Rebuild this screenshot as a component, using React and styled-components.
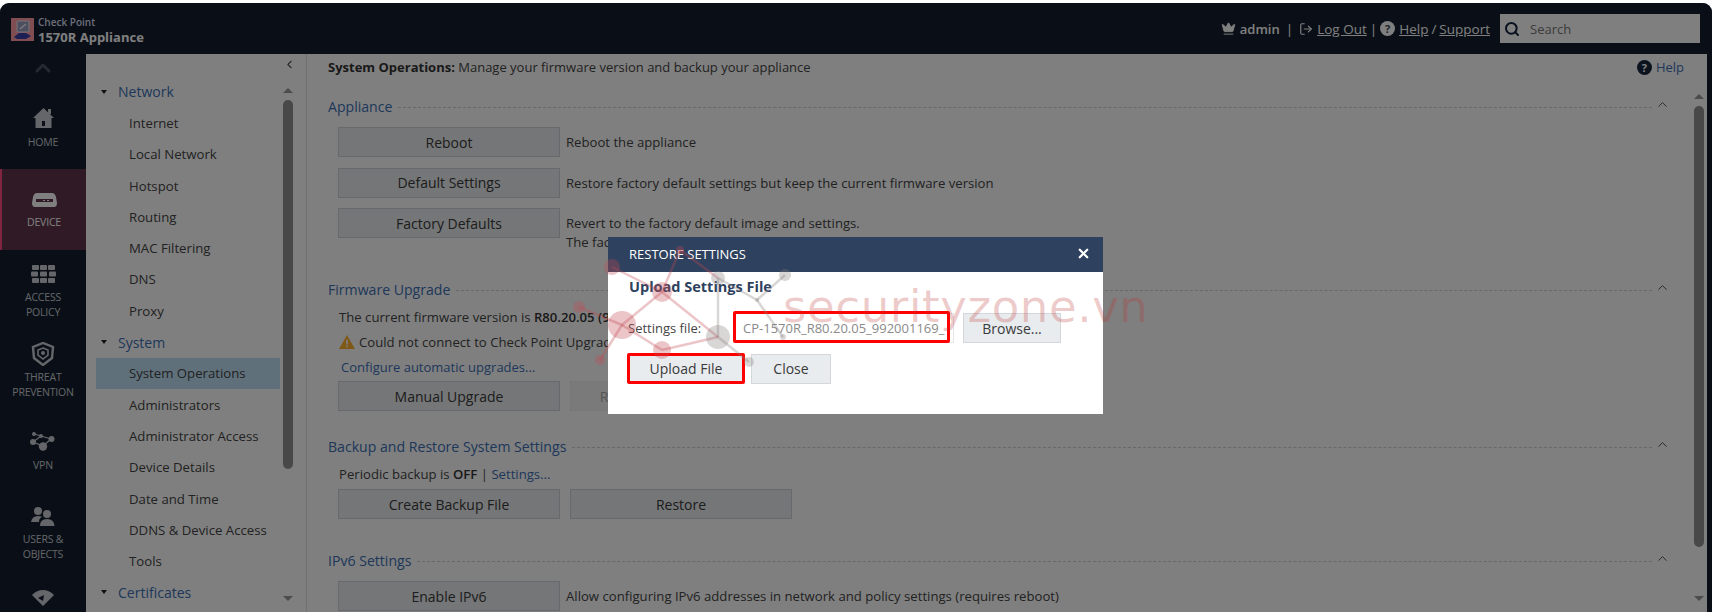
import React from 'react'
import styled, { createGlobalStyle } from 'styled-components'
import { Search, LogOut, ChevronUp, ChevronLeft, Crown, X } from 'lucide-react'

const GlobalStyle = createGlobalStyle`
  html, body {
    margin: 0;
    height: 612px;
    overflow: hidden;
    background: #fff;
    font-family: "Open Sans", "Liberation Sans", sans-serif;
  }
  * { box-sizing: border-box; }
`

const treeData = [
  { head: 'Network', items: ['Internet', 'Local Network', 'Hotspot', 'Routing', 'MAC Filtering', 'DNS', 'Proxy'] },
  { head: 'System', items: ['System Operations', 'Administrators', 'Administrator Access', 'Device Details', 'Date and Time', 'DDNS & Device Access', 'Tools'] },
  { head: 'Certificates', items: [] },
]

const nodes = [
  [52, 37, 8, 0], [120, 20, 4, 0], [102, 62, 10, 0], [62, 95, 14, 0], [19, 77, 6, 0], [40, 130, 5, 0],
  [102, 120, 9, 0], [158, 107, 12, 1], [158, 48, 7, 1], [225, 45, 6, 1], [197, 70, 2, 1], [223, 107, 3, 1], [189, 132, 5, 1],
]
const edges = [
  [0, 2, 0], [1, 2, 0], [1, 8, 0], [8, 7, 1], [2, 3, 0], [2, 7, 0], [3, 4, 0], [3, 5, 0], [3, 6, 0], [6, 7, 0], [7, 12, 1], [8, 10, 1], [10, 9, 1], [10, 11, 1],
]

function HomeIcon() {
  return (
    <svg width="21" height="22" viewBox="0 0 21 22" fill="currentColor">
      <path d="M10.5 1 L21 11 L18.5 11 L18.5 21 L2.5 21 L2.5 11 L0 11 Z M9 14 L9 19 L12 19 L12 14 Z" fillRule="evenodd" />
      <rect x="15" y="2" width="3" height="5" />
    </svg>
  )
}

function DeviceIcon() {
  return (
    <svg width="25" height="14" viewBox="0 0 25 14" fill="currentColor">
      <path d="M5 0 H20 Q23 0 24 4 L25 10 Q25 14 22 14 H3 Q0 14 0 10 L1 4 Q2 0 5 0 Z M4 6 V9 H21 V6 Z" fillRule="evenodd" />
      <rect x="11" y="7" width="2" height="1" /><rect x="15" y="7" width="2" height="1" />
    </svg>
  )
}

function GridIcon() {
  return (
    <svg width="25" height="18" viewBox="0 0 25 18" fill="currentColor">
      <rect x="1" y="0" width="7" height="5" rx="1" /><rect x="9" y="0" width="7" height="5" rx="1" /><rect x="17" y="0" width="7" height="5" rx="1" />
      <rect x="0" y="6.5" width="7" height="5" rx="1" /><rect x="9" y="6.5" width="7" height="5" rx="1" /><rect x="18" y="6.5" width="7" height="5" rx="1" />
      <rect x="1" y="13" width="7" height="5" rx="1" /><rect x="9" y="13" width="7" height="5" rx="1" /><rect x="17" y="13" width="7" height="5" rx="1" />
    </svg>
  )
}

function ShieldIcon() {
  return (
    <svg width="24" height="24" viewBox="0 0 24 24" fill="none" stroke="currentColor">
      <path d="M12 1 L22 5 L21 16 L12 23 L3 16 L2 5 Z" strokeWidth="2.4" />
      <path d="M12 6 L17 8 V13 L12 17 L7 13 V8 Z" strokeWidth="1.6" />
      <circle cx="12" cy="11" r="2" fill="currentColor" stroke="none" />
    </svg>
  )
}

function VpnIcon() {
  return (
    <svg width="26" height="20" viewBox="0 0 26 20" fill="currentColor" stroke="currentColor">
      <path d="M4 2 L11 4 L21 7 L13 14 L3 10 L11 4" strokeWidth="1.2" fill="none" />
      <circle cx="4" cy="2" r="2" stroke="none" /><circle cx="11" cy="4" r="2" stroke="none" /><circle cx="3" cy="10" r="3" stroke="none" />
      <circle cx="13" cy="14.5" r="4.2" stroke="none" /><circle cx="21.5" cy="7" r="3" stroke="none" />
    </svg>
  )
}

function UsersIcon() {
  return (
    <svg width="24" height="20" viewBox="0 0 24 20" fill="currentColor">
      <circle cx="7" cy="5" r="4" />
      <path d="M0 16 Q1 10 7 10 Q10 10 11 11 Q8 12 8 16 Z" />
      <circle cx="16" cy="8" r="4" />
      <path d="M9 20 Q9 13 16 13 Q23 13 23.5 20 Z" />
    </svg>
  )
}

function GaugeIcon() {
  return (
    <svg width="22" height="16" viewBox="0 0 22 16" fill="currentColor">
      <path d="M11 0 Q17 0 22 5 L11 16 L0 5 Q5 0 11 0 Z M12 5 L6 8 L11 11 Z" fillRule="evenodd" />
    </svg>
  )
}

function LogoIcon() {
  return (
    <svg width="23" height="23" viewBox="0 0 23 23">
      <rect width="23" height="23" fill="#ff9aa4" />
      <rect x="6" y="3" width="12" height="11" rx="1" fill="#9a9fc0" stroke="#e8e8f0" />
      <path d="M9 11 L15 6" stroke="#fff" strokeWidth="1.2" />
      <path d="M3 19 L8 15 H15 L20 18 L15 21 H6 Z" fill="#3a40a8" />
    </svg>
  )
}

function WarningIcon() {
  return (
    <svg width="16" height="14" viewBox="0 0 16 14">
      <path d="M8 0 L16 14 H0 Z" fill="#ffb030" />
      <rect x="7.2" y="4.5" width="1.6" height="5" fill="#fff" />
      <rect x="7.2" y="10.5" width="1.6" height="1.6" fill="#fff" />
    </svg>
  )
}

function Section({ title, children, gap, bottom }) {
  return (
    <SectionBox $bottom={bottom}>
      <SectionHead $gap={gap}>
        <SectionTitle>{title}</SectionTitle>
        <DotLine />
        <Collapse><ChevronUp size={15} strokeWidth={1.6} /></Collapse>
      </SectionHead>
      {children}
    </SectionBox>
  )
}

export default function App() {
  return (
    <Page>
      <GlobalStyle />
      <Frame>
        <TopBar>
          <Brand>
            <LogoIcon />
            <BrandText>
              <BrandSmall>Check Point</BrandSmall>
              <BrandBig>1570R Appliance</BrandBig>
            </BrandText>
          </Brand>
          <TopRight>
            <Crown size={15} fill="#fff" strokeWidth={1.5} />
            <AdminName>admin</AdminName>
            <Sep $left={2} $right={2}>|</Sep>
            <LogOut size={14} strokeWidth={2} />
            <TopLink>Log Out</TopLink>
            <Sep $left={-1} $right={-1}>|</Sep>
            <HelpDot $light>?</HelpDot>
            <TopLink>Help</TopLink>
            <Slash>/</Slash>
            <TopLink>Support</TopLink>
            <SearchBox>
              <Search size={16} strokeWidth={3} color="#12233c" />
              <SearchLabel>Search</SearchLabel>
            </SearchBox>
          </TopRight>
        </TopBar>
        <Body>
          <Rail>
            <RailUp><ChevronUp size={24} strokeWidth={3} /></RailUp>
            <RailItem $h={102} $pt={40} $gap={6}><HomeIcon /><RailLabel>HOME</RailLabel></RailItem>
            <RailItem $h={81} $pt={24} $gap={8} $active><DeviceIcon /><RailLabel>DEVICE</RailLabel></RailItem>
            <RailItem $h={77} $pt={15} $gap={7}><GridIcon /><RailLabel>ACCESS<br />POLICY</RailLabel></RailItem>
            <RailItem $h={80} $pt={15} $gap={4}><ShieldIcon /><RailLabel>THREAT<br />PREVENTION</RailLabel></RailItem>
            <RailItem $h={78} $pt={25} $gap={6}><VpnIcon /><RailLabel>VPN</RailLabel></RailItem>
            <RailItem $h={78} $pt={21} $gap={6}><UsersIcon /><RailLabel>USERS &amp;<br />OBJECTS</RailLabel></RailItem>
            <RailItem $h={49} $pt={27}><GaugeIcon /></RailItem>
          </Rail>
          <TreePanel>
            <TreeTop><ChevronLeft size={13} strokeWidth={2} /></TreeTop>
            <TreeBody>
              <TreeList>
                {treeData.map((group) => (
                  <React.Fragment key={group.head}>
                    <TreeHead><Caret />{group.head}</TreeHead>
                    {group.items.map((item) => (
                      <TreeRow key={item} $on={item === 'System Operations'}>{item}</TreeRow>
                    ))}
                  </React.Fragment>
                ))}
              </TreeList>
              <Scroll $side={3} $top={13} $thumbH={369}>
                <ArrowUp />
                <Thumb />
                <ArrowDown />
              </Scroll>
            </TreeBody>
          </TreePanel>
          <Content>
            <TitleRow>
              <span><b>System Operations:</b> Manage your firmware version and backup your appliance</span>
              <HelpLink>
                <HelpDot>?</HelpDot>
                Help
              </HelpLink>
            </TitleRow>
            <ContentMain>
              <Sections>
                <Section title="Appliance" gap={8} bottom={13.5}>
                  <ActionRow>
                    <Btn>Reboot</Btn>
                    <Desc>Reboot the appliance</Desc>
                  </ActionRow>
                  <ActionRow>
                    <Btn>Default Settings</Btn>
                    <Desc>Restore factory default settings but keep the current firmware version</Desc>
                  </ActionRow>
                  <ActionRow>
                    <Btn>Factory Defaults</Btn>
                    <Desc>
                      Revert to the factory default image and settings.<br />
                      The factory firmware version is: R80.20.05 (992001169)
                    </Desc>
                  </ActionRow>
                </Section>
                <Section title="Firmware Upgrade" gap={3} bottom={22}>
                  <InfoLine>The current firmware version is <b>R80.20.05 (992001169)</b></InfoLine>
                  <InfoLine><WarningIcon />Could not connect to Check Point Upgrade Service</InfoLine>
                  <ConfigLink>Configure automatic upgrades...</ConfigLink>
                  <BtnRow>
                    <Btn>Manual Upgrade</Btn>
                    <Btn $faded>Revert to Previous Image</Btn>
                  </BtnRow>
                </Section>
                <Section title="Backup and Restore System Settings" gap={3} bottom={28}>
                  <InfoLine $h={27}>Periodic backup is <b>OFF</b> | <BlueText>Settings...</BlueText></InfoLine>
                  <BtnRow>
                    <Btn>Create Backup File</Btn>
                    <Btn>Restore</Btn>
                  </BtnRow>
                </Section>
                <Section title="IPv6 Settings" gap={8} bottom={0}>
                  <ActionRow>
                    <Btn>Enable IPv6</Btn>
                    <Desc>Allow configuring IPv6 addresses in network and policy settings (requires reboot)</Desc>
                  </ActionRow>
                </Section>
              </Sections>
              <Scroll $side={0} $top={14} $thumbH={441}>
                <ArrowUp />
                <Thumb />
                <ArrowDown />
              </Scroll>
            </ContentMain>
          </Content>
        </Body>
      </Frame>
      <Shade />
      <Modal>
        <ModalHead>
          <span>RESTORE SETTINGS</span>
          <X size={15} strokeWidth={3.5} color="#fff" />
        </ModalHead>
        <ModalBody>
          <ModalTitle>Upload Settings File</ModalTitle>
          <FileRow>
            <FileLabel>Settings file:</FileLabel>
            <FileInput>CP-1570R_R80.20.05_992001169_</FileInput>
            <ModalBtn $w={98}>Browse...</ModalBtn>
            <RedBox />
          </FileRow>
          <ModalActions>
            <ModalBtn $w={118} $marked>Upload File</ModalBtn>
            <ModalBtn $w={80}>Close</ModalBtn>
          </ModalActions>
        </ModalBody>
      </Modal>
      <Watermark viewBox="0 0 240 150" width="240" height="150">
        {edges.map(([a, b, gray], i) => (
          <line key={i} x1={nodes[a][0]} y1={nodes[a][1]} x2={nodes[b][0]} y2={nodes[b][1]} stroke={gray ? '#8a8080' : '#c04a55'} strokeOpacity={0.32} strokeWidth="2.5" />
        ))}
        {nodes.map(([x, y, r, gray], i) => (
          <circle key={i} cx={x} cy={y} r={r} fill={gray ? '#8a8080' : '#c04a55'} fillOpacity={0.32} />
        ))}
      </Watermark>
      <WatermarkText>securityzone.vn</WatermarkText>
    </Page>
  )
}

const Page = styled.div`
  position: relative;
  width: 1717px;
  height: 612px;
  padding: 3px 5px 0 0;
  overflow: hidden;
  background: #fff;
`

const Frame = styled.div`
  height: 609px;
  display: flex;
  flex-direction: column;
  background: #141e2e;
  border-radius: 9px 9px 0 0;
  border-right: 5px solid #141e2e;
  overflow: hidden;
  color: #3a3a3a;
  font-size: 13px;
`

const TopBar = styled.div`
  height: 51px;
  flex: none;
  display: flex;
  align-items: center;
  justify-content: space-between;
  padding: 0 7px 0 11px;
  color: #fff;
`

const Brand = styled.div`
  align-self: flex-start;
  display: flex;
  align-items: flex-start;
  gap: 4px;
  padding-top: 15px;
`

const BrandText = styled.div`
  margin-top: -2px;
  display: flex;
  flex-direction: column;
`

const BrandSmall = styled.span`
  font-size: 10px;
  line-height: 12px;
  font-weight: 600;
  color: #d8dcf0;
`

const BrandBig = styled.span`
  margin-top: 2px;
  font-size: 13px;
  line-height: 15px;
  font-weight: 700;
`

const TopRight = styled.div`
  display: flex;
  align-items: center;
  gap: 4px;
  font-size: 13.5px;
`

const AdminName = styled.span`
  font-weight: 600;
  font-size: 13px;
`

const Sep = styled.span`
  margin: 0 ${(p) => p.$right}px 0 ${(p) => p.$left}px;
`

const Slash = styled.span`
  margin: 0 -1px;
`

const TopLink = styled.span`
  text-decoration: underline;
`

const SearchBox = styled.div`
  width: 200px;
  height: 29px;
  margin-left: 6px;
  padding: 0 4px;
  display: flex;
  align-items: center;
  gap: 10px;
  background: #fff;
`

const SearchLabel = styled.span`
  color: #777;
  font-size: 13px;
`

const Body = styled.div`
  flex: 1;
  display: flex;
  min-height: 0;
`

const Rail = styled.div`
  width: 86px;
  flex: none;
  color: #c8ccd2;
`

const RailUp = styled.div`
  height: 13px;
  display: flex;
  justify-content: center;
  color: #4a5260;

  svg { margin-top: 2px; }
`

const RailItem = styled.div`
  height: ${(p) => p.$h}px;
  display: flex;
  flex-direction: column;
  align-items: center;
  padding-top: ${(p) => p.$pt}px;
  gap: ${(p) => p.$gap || 0}px;
  ${(p) => p.$active && 'background: #60344c; border-left: 2px solid #ff4a80; color: #fff;'}
`

const RailLabel = styled.div`
  font-size: 10.5px;
  line-height: 14.5px;
  text-align: center;
  letter-spacing: -0.2px;
`

const TreePanel = styled.div`
  width: 221px;
  flex: none;
  display: flex;
  flex-direction: column;
  background: #fff;
  border-right: 1px solid #e3e3e3;
`

const TreeTop = styled.div`
  height: 21px;
  display: flex;
  justify-content: flex-end;
  align-items: center;
  padding-right: 10px;
  color: #555;
`

const TreeBody = styled.div`
  flex: 1;
  display: flex;
  min-height: 0;
`

const TreeList = styled.div`
  width: 194px;
  flex: none;
  padding: 1px 0 0 10px;
`

const TreeHead = styled.div`
  height: 31.3px;
  display: flex;
  align-items: center;
  padding-left: 5px;
  color: #3c6fb4;
  font-size: 14px;
`

const Caret = styled.span`
  width: 0;
  height: 0;
  margin-right: 11px;
  border-left: 3.5px solid transparent;
  border-right: 3.5px solid transparent;
  border-top: 4px solid #222;
`

const TreeRow = styled.div`
  height: 31.3px;
  display: flex;
  align-items: center;
  padding-left: 33px;
  color: #444;
  font-size: 13.2px;
  ${(p) => p.$on && 'background: #bfe0f7;'}
`

const Scroll = styled.div`
  width: 10px;
  margin: 0 3px 0 ${(p) => p.$side}px;
  flex: none;
  display: flex;
  flex-direction: column;
  align-items: center;
  padding: ${(p) => p.$top}px 0 11px;
  --thumb: ${(p) => p.$thumbH}px;
`

const ArrowUp = styled.div`
  width: 0;
  height: 0;
  flex: none;
  margin-bottom: 7px;
  border-left: 5px solid transparent;
  border-right: 5px solid transparent;
  border-bottom: 5px solid #999;
`

const ArrowDown = styled.div`
  width: 0;
  height: 0;
  flex: none;
  margin-top: auto;
  border-left: 5px solid transparent;
  border-right: 5px solid transparent;
  border-top: 5px solid #999;
`

const Thumb = styled.div`
  width: 100%;
  height: var(--thumb);
  flex: none;
  background: #909090;
  border-radius: 5px;
`

const Content = styled.div`
  flex: 1;
  min-width: 0;
  display: flex;
  flex-direction: column;
  background: #fff;
  padding-left: 21px;
`

const TitleRow = styled.div`
  height: 26px;
  flex: none;
  display: flex;
  align-items: center;
  justify-content: space-between;
  padding-right: 23px;
  font-size: 13px;
  color: #444;

  b { font-weight: 700; color: #333; }
`

const HelpLink = styled.div`
  display: flex;
  align-items: center;
  gap: 4px;
  color: #3c6fb4;
`

const HelpDot = styled.span`
  width: 15px;
  height: 15px;
  flex: none;
  display: flex;
  align-items: center;
  justify-content: center;
  border-radius: 50%;
  background: ${(p) => (p.$light ? '#fff' : '#17263e')};
  color: ${(p) => (p.$light ? '#3a4456' : '#fff')};
  font-size: 11px;
  font-weight: 700;
`

const ContentMain = styled.div`
  flex: 1;
  min-height: 0;
  display: flex;
`

const Sections = styled.div`
  flex: 1;
  min-width: 0;
  padding: 13px 24px 0 0;
`

const SectionBox = styled.div`
  padding-bottom: ${(p) => p.$bottom}px;
`

const SectionHead = styled.div`
  height: 26px;
  margin-bottom: ${(p) => p.$gap}px;
  display: flex;
  align-items: center;
`

const SectionTitle = styled.span`
  color: #3c6fb4;
  font-size: 14.1px;
`

const DotLine = styled.div`
  flex: 1;
  margin: 2px 3px 0 6px;
  border-top: 1px dashed #d0d0d0;
`

const Collapse = styled.span`
  display: flex;
  margin-top: -3px;
  color: #555;
`

const ActionRow = styled.div`
  min-height: 30px;
  margin: 0 0 10.5px 10px;
  display: flex;
  align-items: flex-start;
  gap: 6px;
`

const Desc = styled.div`
  padding-top: 6px;
  font-size: 13.15px;
  line-height: 19px;
  color: #444;
`

const Btn = styled.div`
  width: 222px;
  height: 30px;
  flex: none;
  display: flex;
  align-items: center;
  justify-content: center;
  background: ${(p) => (p.$faded ? '#f4f4f4' : '#e9ecef')};
  border: 1px solid ${(p) => (p.$faded ? '#eeeeee' : '#cfd3d8')};
  color: ${(p) => (p.$faded ? '#aaa' : '#3a3a3a')};
  font-size: 14px;
`

const BtnRow = styled.div`
  margin-left: 10px;
  display: flex;
  gap: 10px;
`

const InfoLine = styled.div`
  height: ${(p) => p.$h || 24.5}px;
  margin-left: 11px;
  font-size: 13.15px;
  line-height: 24.5px;
  color: #444;
  white-space: nowrap;

  b { font-weight: 600; color: #333; }
  svg { margin-right: 4px; vertical-align: -2px; }
`

const ConfigLink = styled.div`
  height: 27px;
  margin-left: 13px;
  color: #3c6fb4;
  font-size: 13px;
  line-height: 26px;
`

const BlueText = styled.span`
  color: #3c6fb4;
`

const Shade = styled.div`
  position: absolute;
  inset: 3px 5px 0 0;
  border-radius: 9px 9px 0 0;
  background: rgba(0, 0, 0, 0.5);
`

const Modal = styled.div`
  position: absolute;
  left: 608px;
  top: 237px;
  width: 495px;
  height: 177px;
  background: #fff;
`

const ModalHead = styled.div`
  height: 35px;
  display: flex;
  align-items: center;
  justify-content: space-between;
  padding: 0 12px 2px 21px;
  background: #2e415e;
  color: #fff;
  font-size: 13px;
`

const ModalBody = styled.div`
  padding: 5px 20px 0 20px;
`

const ModalTitle = styled.div`
  height: 20px;
  padding-left: 1px;
  color: #2e415e;
  font-size: 14.5px;
  font-weight: 700;
  line-height: 20px;
`

const FileRow = styled.div`
  position: relative;
  height: 30px;
  margin-top: 16px;
  display: flex;
  align-items: center;
`

const FileLabel = styled.div`
  width: 107px;
  flex: none;
  color: #444;
  font-size: 13px;
`

const FileInput = styled.div`
  width: 219px;
  height: 30px;
  flex: none;
  margin-right: 9px;
  padding-left: 7px;
  display: flex;
  align-items: center;
  overflow: hidden;
  white-space: nowrap;
  border: 1px solid #e3e5e8;
  color: #8a8a8a;
  font-size: 13px;
`

const RedBox = styled.div`
  position: absolute;
  left: 105px;
  top: -2px;
  width: 217px;
  height: 32px;
  border: 3px solid #f00;
  border-radius: 2px;
`

const ModalActions = styled.div`
  margin: 10px 0 0 -1px;
  display: flex;
  align-items: center;
  gap: 6px;
`

const ModalBtn = styled.div`
  width: ${(p) => p.$w}px;
  height: ${(p) => (p.$marked ? 31 : 30)}px;
  flex: none;
  display: flex;
  align-items: center;
  justify-content: center;
  background: #e9ecef;
  border: 1px solid #d3d6da;
  color: #3a3a3a;
  font-size: 14px;
  ${(p) => p.$marked && 'border: 3px solid #f00; border-radius: 2px;'}
`

const Watermark = styled.svg`
  position: absolute;
  left: 560px;
  top: 230px;
  pointer-events: none;
`

const WatermarkText = styled.div`
  position: absolute;
  left: 783px;
  top: 282px;
  color: rgba(190, 50, 50, 0.25);
  font-family: "DejaVu Sans", sans-serif;
  font-size: 45px;
  line-height: 50px;
  letter-spacing: 0.6px;
  white-space: nowrap;
  pointer-events: none;
`
